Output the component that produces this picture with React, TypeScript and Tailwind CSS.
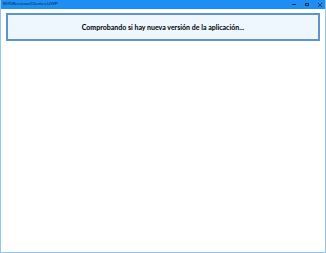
import React from 'react';

export default function App() {
  return (
    <div className="w-[326px] h-[253px] bg-white flex flex-col overflow-hidden border-x border-b border-[#92c6f0]" style={{ fontFamily: 'Lato, "Open Sans", sans-serif' }}>
      <header className="h-[9px] bg-[#1f8ef4] flex items-center justify-between pl-[3px] -mx-px">
        <span className="text-[4.5px] leading-none text-[#082a50]">RMSRecursosClientes.UWP</span>
        <div className="flex items-center h-full text-[#0c2f55]">
          <div className="w-[13px] flex justify-center">
            <div className="w-[4px] h-px bg-current" />
          </div>
          <div className="w-[13px] flex justify-center">
            <div className="w-[4px] h-[3px] border border-current" />
          </div>
          <div className="w-[13px] flex justify-center">
            <svg width="4" height="4" viewBox="0 0 4 4">
              <path d="M0 0L4 4M4 0L0 4" stroke="currentColor" strokeWidth="0.8" />
            </svg>
          </div>
        </div>
      </header>
      <main className="flex-1 px-[5px] pt-[4px]">
        <div className="h-[28px] border-2 border-[#5e93cc] bg-[#eef6fe] flex items-center justify-center">
          <p className="text-[7px] font-bold text-black">Comprobando si hay nueva versión de la aplicación...</p>
        </div>
      </main>
    </div>
  );
}
